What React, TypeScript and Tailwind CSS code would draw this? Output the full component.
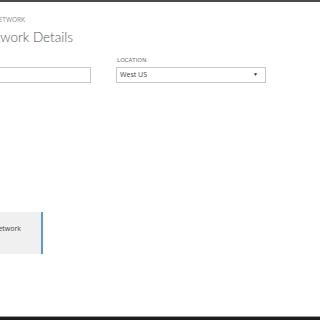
export default function App() {
  return (
    <div
      className="w-[320px] h-[320px] flex flex-col bg-white overflow-hidden"
      style={{ fontFamily: '"Open Sans", "Liberation Sans", sans-serif' }}
    >
      {/* Top frame */}
      <div className="h-[2px] bg-[#4a4a4a]" />

      {/* Content (left part of the page is scrolled out of view) */}
      <div className="flex-1 flex flex-col">
        <div className="mt-[13px] w-[25px] flex justify-end whitespace-nowrap">
          <p className="text-[6.5px] leading-[9px] uppercase text-[#8a8a8a]">
            Create a Virtual Network
          </p>
        </div>
        <div className="mt-[3px] w-[73px] flex justify-end whitespace-nowrap">
          <h1
            className="text-[13.5px] leading-[20px] font-light text-[#555]"
            style={{ fontFamily: 'Lato, "Open Sans", sans-serif' }}
          >
            Virtual Network Details
          </h1>
        </div>

        <div className="mt-[9px] flex items-end">
          <div className="w-[91px] flex justify-end">
            <input
              className="shrink-0 w-[165px] h-[16px] border border-[#c8c8c8] outline-none text-[7px] px-1"
              defaultValue=""
            />
          </div>
          <div className="ml-[25px] flex flex-col">
            <label className="text-[6px] leading-[8px] uppercase text-[#666] mb-[3px] pl-px">
              Location
            </label>
            <div className="w-[150px] h-[16px] border border-[#c8c8c8] flex items-center justify-between px-[3px]">
              <span className="text-[7px] text-[#444]">West US</span>
              <span className="text-[5px] text-[#333] mr-[4px]">▼</span>
            </div>
          </div>
        </div>

        <div className="mt-[129px] w-[43px] flex justify-end">
          <button className="shrink-0 w-[117px] h-[42px] bg-[#f0f0f0] border-r-2 border-[#5b9bd5] flex justify-end items-start pt-[12px] pr-[20px] text-[7px] text-[#444] whitespace-nowrap">
            Network
          </button>
        </div>
      </div>

      {/* Bottom frame */}
      <div className="h-px bg-[#9a9a9a]" />
      <div className="h-[3px] bg-[#1c1c1c]" />
    </div>
  );
}
